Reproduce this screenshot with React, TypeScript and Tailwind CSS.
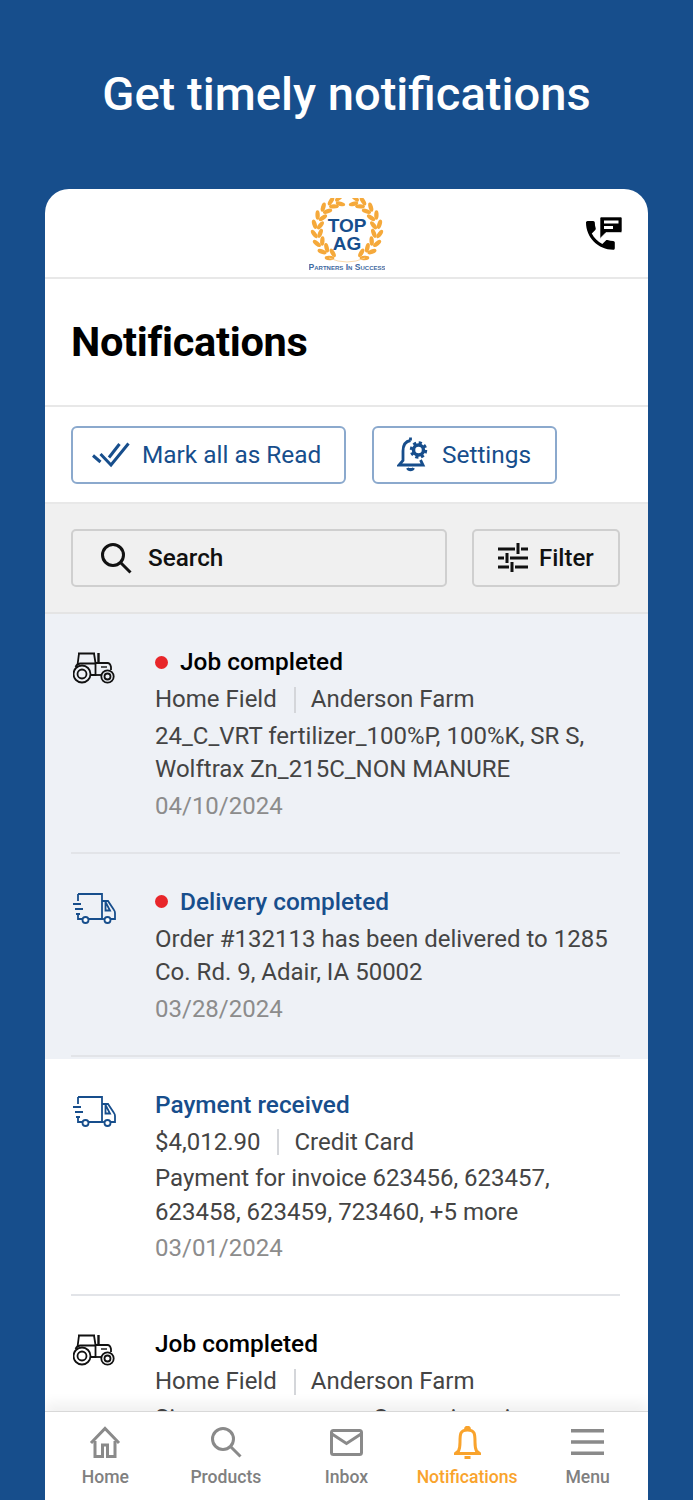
const toRad = Math.PI / 180

// wreath leaves, one pair per step along the left arc
const leaves = [32, 49, 66, 83, 100, 117, 134, 151, 166].flatMap((deg) => {
  const t = deg * toRad
  const rot = Math.atan2(-Math.cos(t), Math.sin(t)) / toRad
  const at = (r: number) => ({ x: 38 - r * Math.sin(t), y: 32 + r * Math.cos(t) })
  return [
    { ...at(33), rot: rot - 28 },
    { ...at(27), rot: rot + 28 },
  ]
})

const notifications = [
  {
    icon: 'tractor',
    unread: true,
    title: 'Job completed',
    titleColor: 'text-black',
    meta: ['Home Field', 'Anderson Farm'],
    body: ['24_C_VRT fertilizer_100%P, 100%K, SR S,', 'Wolftrax Zn_215C_NON MANURE'],
    date: '04/10/2024',
  },
  {
    icon: 'truck',
    unread: true,
    title: 'Delivery completed',
    titleColor: 'text-[#174e8c]',
    body: ['Order #132113 has been delivered to 1285', 'Co. Rd. 9, Adair, IA 50002'],
    date: '03/28/2024',
  },
  {
    icon: 'truck',
    unread: false,
    title: 'Payment received',
    titleColor: 'text-[#174e8c]',
    meta: ['$4,012.90', 'Credit Card'],
    body: ['Payment for invoice 623456, 623457,', '623458, 623459, 723460, +5 more'],
    date: '03/01/2024',
  },
  {
    icon: 'tractor',
    unread: false,
    title: 'Job completed',
    titleColor: 'text-black',
    meta: ['Home Field', 'Anderson Farm'],
    body: ['Six passes over one Corn mix, using'],
    date: '',
  },
]

function Logo() {
  const side = leaves.map((l, i) => (
    <ellipse
      key={i}
      cx={l.x}
      cy={l.y}
      rx="2.2"
      ry="4.8"
      fill="#f5a93b"
      transform={`rotate(${l.rot} ${l.x} ${l.y})`}
    />
  ))
  return (
    <svg width="76" height="74" viewBox="0 0 76 74">
      {side}
      <g transform="translate(76 0) scale(-1 1)">{side}</g>
      <path d="M20 60 Q38 68 56 60" fill="none" stroke="#f9cf94" strokeWidth="0.8" />
      <text x="38" y="34" textAnchor="middle" fontFamily="Liberation Sans" fontSize="19" fontWeight="700" fill="#174e8c">TOP</text>
      <text x="38" y="52" textAnchor="middle" fontFamily="Liberation Sans" fontSize="19" fontWeight="700" fill="#174e8c">AG</text>
      <text x="38" y="72" textAnchor="middle" fontFamily="Liberation Sans" fontSize="8.600" fontWeight="700" fill="#3f6a9f" className="[font-variant-caps:small-caps]">Partners In Success</text>
    </svg>
  )
}

function PhoneChat() {
  return (
    <svg width="37" height="34" viewBox="0 0 37 34" className="text-black">
      <path
        transform="translate(-3.800 -0.800) scale(1.600)"
        d="M6.620 10.790c1.440 2.830 3.760 5.140 6.590 6.590l2.200-2.200c.27-.27.67-.36 1.020-.24 1.120.37 2.330.57 3.570.57.55 0 1 .45 1 1V20c0 .55-.45 1-1 1-9.390 0-17-7.610-17-17 0-.55.45-1 1-1h3.500c.55 0 1 .45 1 1 0 1.250.2 2.450.57 3.570.11.35.03.74-.25 1.020l-2.200 2.200z"
        fill="currentColor"
      />
      <path d="M15 1.500C15 .6 15.600 0 16.500 0h19C36.400 0 37 .6 37 1.500V14c0 .8-.6 1.500-1.500 1.500H21L15 21.500z" fill="currentColor" stroke="#fff" strokeWidth="0.600" />
      <rect x="19" y="3.500" width="14.500" height="3" fill="#fff" />
      <rect x="19" y="9" width="9" height="3" fill="#fff" />
    </svg>
  )
}

function DoubleCheck() {
  return (
    <svg width="38" height="26" viewBox="0 0 38 26" fill="none" stroke="#174e8c" strokeWidth="3">
      <path d="M1 13.500l7.500 6.500" />
      <path d="M8.500 12l10.500 11L36.500 1.500" />
      <path d="M17 15.500L27.500 2" />
    </svg>
  )
}

function BellGear() {
  return (
    <svg width="32" height="35" viewBox="0 0 32 35" fill="none" stroke="#174e8c" strokeWidth="2.800">
      <path d="M13.500 3.500C8 4.500 6 8.500 6 14v9.500L2 28h24l-2.500-5" />
      <path d="M13.500 .5v3" />
      <path d="M10.500 31c1 2.500 5 2.500 6 0" fill="#174e8c" />
      <circle cx="21.500" cy="13" r="7" strokeWidth="3.500" strokeDasharray="3 2.500" />
      <circle cx="21.500" cy="13" r="5" strokeWidth="3.500" />
    </svg>
  )
}

function SearchGlyph({ size, color, width }: { size: number; color: string; width: number }) {
  return (
    <svg width={size} height={size} viewBox="0 0 32 32" fill="none" stroke={color} strokeWidth={width}>
      <circle cx="13" cy="13" r="10.500" />
      <path d="M20.500 20.500L30.500 30.500" />
    </svg>
  )
}

function Sliders() {
  return (
    <svg width="30" height="30" viewBox="0 0 30 30" fill="none" stroke="#111" strokeWidth="3">
      <path d="M0 6h17M23 6h7M20 0v11" />
      <path d="M0 15h6M12 15h18M9 10v10" />
      <path d="M0 24h11M17 24h13M14 19v10" />
    </svg>
  )
}

function Tractor() {
  return (
    <svg width="42" height="32" viewBox="0 0 42 32" fill="none" stroke="#111" strokeWidth="1.800">
      <path d="M5 1.500h17M6 1.500L4.500 13M21 1.500l1.500 9.500h12c2 0 3 1.500 3.500 4v3" />
      <path d="M25.500 1v10" strokeWidth="2.400" />
      <path d="M2.500 15c1-2 3-3.500 5-3.500H22.500v11.500h-5" />
      <path d="M22.500 23h5.500" />
      <path d="M28 15h6" strokeWidth="1.400" />
      <circle cx="9" cy="22" r="8.500" />
      <circle cx="9" cy="22" r="4.500" />
      <circle cx="34.500" cy="24.500" r="6.200" />
      <circle cx="34.500" cy="24.500" r="3" />
    </svg>
  )
}

function Truck() {
  return (
    <svg width="43" height="31" viewBox="0 0 43 31" fill="none" stroke="#174e8c" strokeWidth="1.800">
      <path d="M5 1h24v25H16" />
      <path d="M5 1v7" />
      <path d="M5 21v5h4" />
      <path d="M29 8h6l6 9c.8 1 1 2 1 3v6h-4" />
      <path d="M29 26h2.500" />
      <path d="M32.500 9l4.500 8.500h-4.500z" />
      <path d="M0 11h8M2 16h8M3 21h4" />
      <circle cx="12.500" cy="27" r="3" fill="#fff" />
      <circle cx="34.500" cy="27" r="3" fill="#fff" />
    </svg>
  )
}

function NavIcon({ name }: { name: string }) {
  if (name === 'Home')
    return (
      <svg width="32" height="32" viewBox="0 0 32 32" fill="none" stroke="#8a8a8a" strokeWidth="3">
        <path d="M2 17L16 2.500 30 17" />
        <path d="M6 15v15.500h7.500V19h5v11.500H26V15" />
      </svg>
    )
  if (name === 'Products') return <SearchGlyph size={32} color="#8a8a8a" width={3} />
  if (name === 'Inbox')
    return (
      <svg width="33" height="27" viewBox="0 0 33 27" fill="none" stroke="#8a8a8a" strokeWidth="3">
        <rect x="1.500" y="1.500" width="30" height="24" rx="2" />
        <path d="M2 5l14.500 9.500L31 5" />
      </svg>
    )
  if (name === 'Notifications')
    return (
      <svg width="27" height="33" viewBox="0 0 27 33" fill="none" stroke="#f9a32c" strokeWidth="3">
        <path d="M7 7c1-2 3-3 6.500-3s5.500 1 6.500 3c1 2 1 4.500 1 9 0 5 .5 7 1.500 9l3 2.500H1.500l3-2.500c1-2 1.500-4 1.500-9 0-4.500 0-7 1-9z" />
        <path d="M11.500 3.500c0-3 4-3 4 0" fill="#f9a32c" />
        <path d="M10.500 31.500h6" />
      </svg>
    )
  return (
    <svg width="33" height="26" viewBox="0 0 33 26" fill="#8a8a8a">
      <rect width="33" height="3.500" y="0" />
      <rect width="33" height="3.500" y="11.250" />
      <rect width="33" height="3.500" y="22.500" />
    </svg>
  )
}

export default function App() {
  return (
    <div className="h-[1500px] overflow-hidden bg-[#174e8c] flex flex-col font-['Roboto',sans-serif]">
      <h1 className="h-[189px] pt-[60px] text-center text-[47.100px] leading-[68px] font-medium text-white">
        Get timely notifications
      </h1>

      <div className="mx-[45px] flex-1 min-h-0 flex flex-col bg-white rounded-t-[24px] overflow-hidden">
        {/* Logo bar */}
        <div className="relative h-[90px] shrink-0 flex justify-center pt-[9px] border-b-2 border-[#e8e8e8]">
          <Logo />
          <div className="absolute right-[26px] top-[28px]">
            <PhoneChat />
          </div>
        </div>

        <div className="h-[128px] shrink-0 flex items-center px-[26px] border-b-2 border-[#e8e8e8]">
          <h2 className="text-[41.500px] font-bold text-black tracking-[-0.300px]">Notifications</h2>
        </div>

        {/* Actions */}
        <div className="h-[97px] shrink-0 flex items-center gap-[26px] px-[26px] border-b-2 border-[#e8e8e8]">
          <button className="w-[275px] h-[58px] flex items-center gap-[12px] pl-[19px] rounded-[6px] border-2 border-[#8ba9cd] text-[24.400px] text-[#174e8c]">
            <DoubleCheck />
            <span className="mt-[2px]">Mark all as Read</span>
          </button>
          <button className="w-[185px] h-[58px] flex items-center gap-[13px] pl-[23px] rounded-[6px] border-2 border-[#8ba9cd] text-[24.400px] text-[#174e8c]">
            <BellGear />
            <span className="mt-[2px]">Settings</span>
          </button>
        </div>

        {/* Search */}
        <div className="h-[110px] shrink-0 flex items-center gap-[25px] px-[26px] bg-[#f0f0f0] border-b-2 border-[#e4e4e4]">
          <div className="w-[376px] h-[58px] flex items-center gap-[16px] pl-[27px] rounded-[5px] border-2 border-[#cfcfcf] text-[24.300px] font-medium text-[#111]">
            <SearchGlyph size={32} color="#111" width={3} />
            Search
          </div>
          <div className="w-[148px] h-[58px] flex items-center gap-[11px] pl-[24px] rounded-[5px] border-2 border-[#cfcfcf] text-[24px] font-medium text-[#111]">
            <Sliders />
            Filter
          </div>
        </div>

        {/* List */}
        <div className="flex-1 min-h-0 overflow-hidden">
          {notifications.map((n, i) => (
            <div
              key={i}
              className={n.unread ? 'bg-[#eef1f6] pl-[26px] pr-[28px] shadow-[0_2px_0_#eef1f6]' : 'pl-[26px] pr-[28px]'}
            >
              <div className={`flex pt-[32px] ${i === 3 ? '' : 'pb-[28.500px] border-b-2 border-[#e2e4e8]'}`}>
                <div className={`w-[84px] shrink-0 pl-[2px] ${n.icon === 'tractor' ? 'pt-[6px]' : 'pt-[7px]'}`}>
                  {n.icon === 'tractor' ? <Tractor /> : <Truck />}
                </div>
                <div className="min-w-0 flex-1 text-[24px] leading-[33.500px] text-[#444] whitespace-nowrap">
                  <div className={`flex items-center h-[34px] pb-[2px] text-[24.400px] font-medium ${n.titleColor}`}>
                    {n.unread && <span className="w-[13px] h-[13px] rounded-full bg-[#e8262a] mr-[12px]" />}
                    {n.title}
                  </div>
                  {n.meta && (
                    <div className="flex items-center mt-[3px]">
                      <span>{n.meta[0]}</span>
                      <span className="w-[2px] h-[26px] bg-[#d4d6da] ml-[17px] mr-[15px]" />
                      <span>{n.meta[1]}</span>
                    </div>
                  )}
                  <div className="mt-[3px]">
                    {n.body.map((line) => (
                      <div key={line}>{line}</div>
                    ))}
                  </div>
                  {n.date && <div className="mt-[3px] text-[#8c8c8c]">{n.date}</div>}
                </div>
              </div>
            </div>
          ))}
        </div>

        {/* Bottom nav */}
        <div className="h-[89px] shrink-0 grid grid-cols-5 bg-white border-t border-[#d8d8d8] shadow-[0_-8px_12px_rgba(0,0,0,0.06)] z-10">
          {['Home', 'Products', 'Inbox', 'Notifications', 'Menu'].map((name) => (
            <div key={name} className="flex flex-col items-center">
              <div className="h-[36px] mt-[12px] flex items-center justify-center">
                <NavIcon name={name} />
              </div>
              <span
                className={`mt-[5px] text-[17.600px] leading-[24px] font-medium ${
                  name === 'Notifications' ? 'text-[#f9a32c]' : 'text-[#808080]'
                }`}
              >
                {name}
              </span>
            </div>
          ))}
        </div>
      </div>
    </div>
  )
}
